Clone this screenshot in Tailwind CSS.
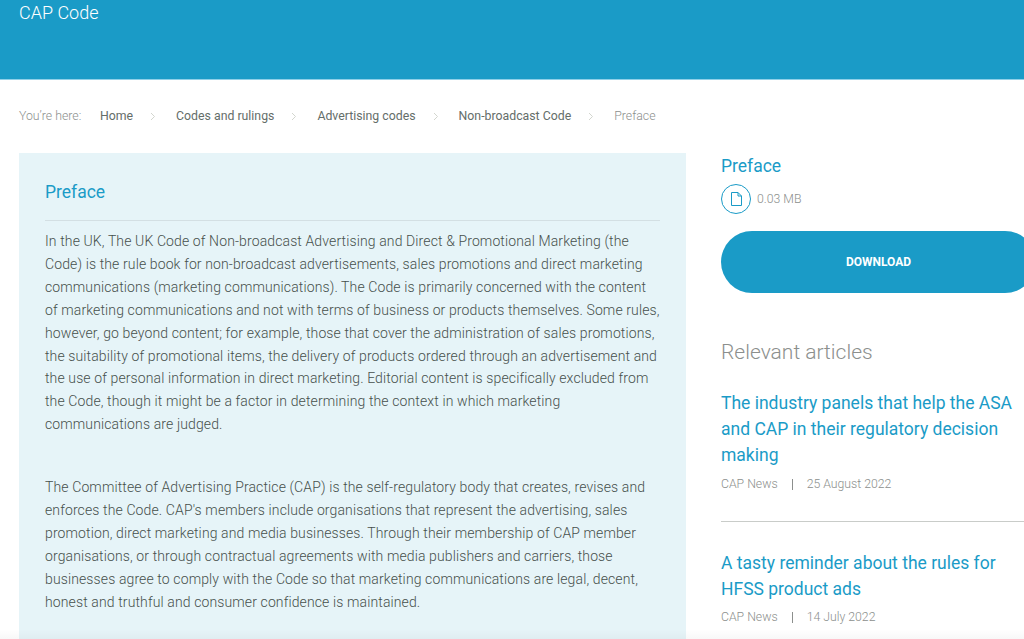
<!DOCTYPE html>
<html><head><meta charset="utf-8"><script src="https://cdn.jsdelivr.net/npm/@tailwindcss/browser@4"></script></head>
<body class="relative h-[639px] overflow-hidden bg-white font-['Roboto',sans-serif] text-[#5a6460]">
<header class="h-[80px] border-b border-[#8fd0e8] bg-[#1a9bc7] px-[19px] text-[18px] leading-[26px] text-white font-light">CAP Code</header>
<nav class="flex h-[73px] items-center pl-[19px] text-[12.3px] font-normal">
  <span class="w-[81px] font-light text-[#8c8f8d]">You’re here:</span>
  <span class="text-[#646d69]">Home</span><span class="flex w-[43px] pl-[17px]"><svg width="6" height="9" viewBox="0 0 6 9" fill="none" stroke="#d3d6cf"><path d="M1 1l3.500 3.500L1 8"/></svg></span>
  <span class="text-[#646d69]">Codes and rulings</span><span class="flex w-[43px] pl-[17px]"><svg width="6" height="9" viewBox="0 0 6 9" fill="none" stroke="#d3d6cf"><path d="M1 1l3.500 3.500L1 8"/></svg></span>
  <span class="text-[#646d69]">Advertising codes</span><span class="flex w-[43px] pl-[17px]"><svg width="6" height="9" viewBox="0 0 6 9" fill="none" stroke="#d3d6cf"><path d="M1 1l3.500 3.500L1 8"/></svg></span>
  <span class="text-[#646d69]">Non-broadcast Code</span><span class="flex w-[43px] pl-[17px]"><svg width="6" height="9" viewBox="0 0 6 9" fill="none" stroke="#d3d6cf"><path d="M1 1l3.500 3.500L1 8"/></svg></span>
  <span class="font-light text-[#8c8f8d]">Preface</span>
</nav>
<main class="flex items-start pl-[19px]">
  <section class="h-[520px] w-[667px] shrink-0 bg-[#e6f4f8] px-[26px] pt-[28px]">
    <h1 class="border-b border-[#d3dfe3] pb-[17px] text-[17.5px] leading-[22px] font-normal text-[#1a9bc7]">Preface</h1>
    <p class="pt-[9px] text-[14px] leading-[22.9px] font-light tracking-[0.12px] text-[#46504c]">In the UK, The UK Code of Non-broadcast Advertising and Direct &amp; Promotional Marketing (the Code) is the rule book for non-broadcast advertisements, sales promotions and direct marketing communications (marketing communications). The Code is primarily concerned with the content of marketing communications and not with terms of business or products themselves. Some rules, however, go beyond content; for example, those that cover the administration of sales promotions, the suitability of promotional items, the delivery of products ordered through an advertisement and the use of personal information in direct marketing. Editorial content is specifically excluded from the Code, though it might be a factor in determining the context in which marketing communications are judged.</p>
    <p class="pt-[40px] text-[14px] leading-[22.9px] font-light tracking-[0.12px] text-[#46504c]">The Committee of Advertising Practice (CAP) is the self-regulatory body that creates, revises and enforces the Code. CAP's members include organisations that represent the advertising, sales promotion, direct marketing and media businesses. Through their membership of CAP member organisations, or through contractual agreements with media publishers and carriers, those businesses agree to comply with the Code so that marketing communications are legal, decent, honest and truthful and consumer confidence is maintained.</p>
  </section>
  <aside class="ml-[35px] w-[303px] shrink-0">
    <h2 class="text-[17.5px] leading-[26px] text-[#1a9bc7]">Preface</h2>
    <div class="mt-[5px] flex items-center gap-[6px]">
      <span class="flex h-[30px] w-[30px] items-center justify-center rounded-full border border-[#1a9bc7]">
        <svg width="11" height="14" viewBox="0 0 11 14" fill="none" stroke="#1a9bc7" stroke-width="1"><path d="M.5.5h6.5l3.500 3.500v9.500h-10zM7 .5v3.500h3.500"/></svg>
      </span>
      <span class="text-[12.25px] font-light text-[#8c8f8d]">0.03 MB</span>
    </div>
    <a class="mt-[17px] flex h-[62px] w-[315px] items-center justify-center rounded-full bg-[#1a9bc7] text-[12px] font-bold text-white">DOWNLOAD</a>
    <h2 class="mt-[45px] text-[21px] leading-[28px] font-light text-[#8c8f8d]">Relevant articles</h2>
    <h3 class="mt-[24px] text-[17.5px] leading-[26px] font-normal text-[#1a9bc7]">The industry panels that help the ASA and CAP in their regulatory decision making</h3>
    <div class="mt-[6px] flex h-[20px] items-center text-[12.25px] font-light text-[#8c8f8d]"><span>CAP News</span><span class="mx-[14px] h-[11px] w-px bg-[#8c8f8d]"></span><span>25 August 2022</span></div>
    <hr class="mt-[27px] border-[#c9ccc9]">
    <h3 class="mt-[28px] text-[17.5px] leading-[26px] font-normal text-[#1a9bc7]">A tasty reminder about the rules for HFSS product ads</h3>
    <div class="mt-[5px] flex h-[20px] items-center text-[12.25px] font-light text-[#8c8f8d]"><span>CAP News</span><span class="mx-[14px] h-[11px] w-px bg-[#8c8f8d]"></span><span>14 July 2022</span></div>
  </aside>
</main>
<div class="absolute inset-x-0 bottom-0 h-[10px] bg-gradient-to-b from-transparent to-black/3"></div>
</body></html>
